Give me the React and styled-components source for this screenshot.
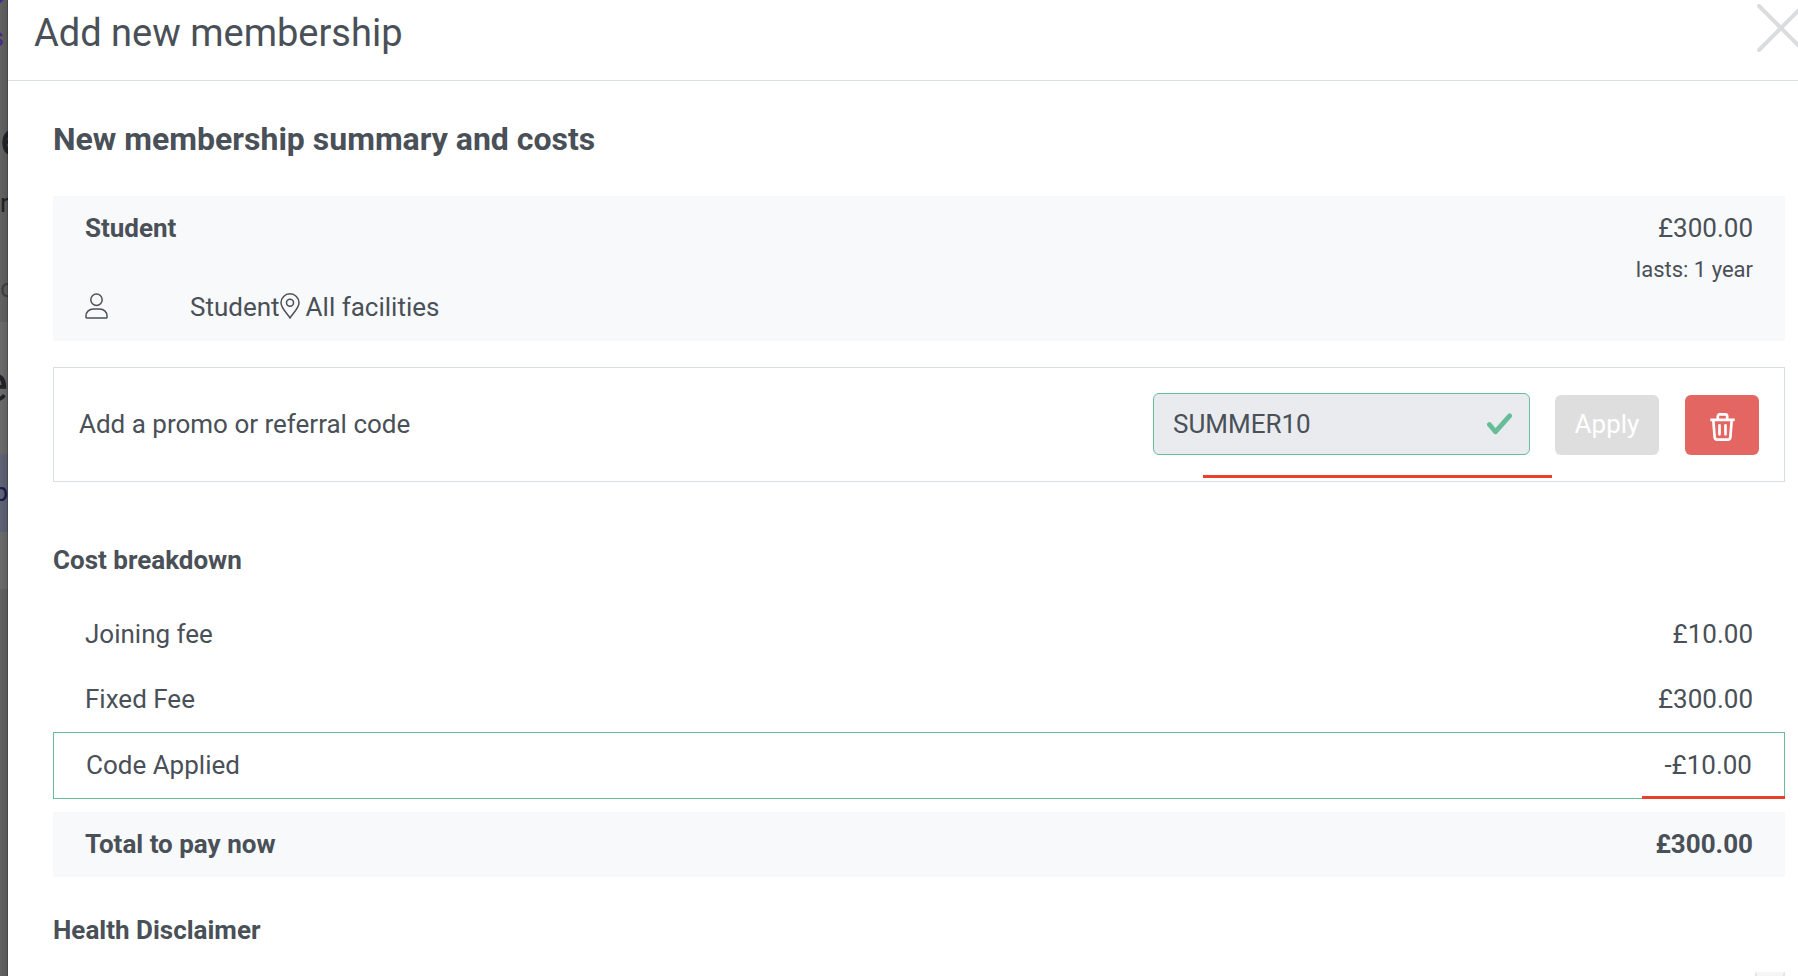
import React from 'react'
import styled, { createGlobalStyle } from 'styled-components'

const GlobalStyle = createGlobalStyle`
  * {
    box-sizing: border-box;
  }

  body {
    margin: 0;
    background: #fff;
    color: #495057;
    font-family: Roboto, sans-serif;
    font-size: 26px;
    line-height: 39px;
  }
`

const Page = styled.div`
  display: flex;
  height: 100vh;
  overflow: hidden;
`

const Backdrop = styled.div`
  flex: 0 0 8px;
  position: relative;
  overflow: hidden;
  background: #626262;

  &::after {
    content: '';
    position: absolute;
    inset: 0;
    background: linear-gradient(to right, transparent, rgba(0, 0, 0, 0.1) 85%, rgba(0, 0, 0, 0.4));
  }
`

const Strip = styled.div`
  display: flex;
  flex-direction: column;
  align-items: flex-start;
  padding: ${props => props.$pad || 0};
  background: ${props => props.$color};
`

const Peek = styled.span`
  align-self: ${props => (props.$end ? 'flex-end' : 'flex-start')};
  margin-top: ${props => props.$gap || 0}px;
  padding-right: ${props => props.$inset || 0}px;
  color: ${props => props.$color || '#212529'};
  font-size: ${props => (props.$large ? 52 : 26)}px;
  line-height: 40px;
`

const Dot = styled.span`
  align-self: flex-end;
  width: 22px;
  height: 22px;
  margin-top: -17px;
  margin-right: 3px;
  border-radius: 50%;
  background: #46298f;
`

const Modal = styled.section`
  flex: 1;
  min-width: 0;
  overflow-x: hidden;
  overflow-y: auto;
  scrollbar-width: none;
  background: #fff;
`

const Header = styled.header`
  display: flex;
  align-items: flex-start;
  justify-content: space-between;
  padding: 4px 0 18px 26px;
  border-bottom: 1px solid #d5dde5;
`

const Title = styled.h1`
  margin: 0;
  font-size: 38px;
  font-weight: 400;
  line-height: 58px;
`

const CloseButton = styled.button`
  flex: none;
  width: 48px;
  height: 48px;
  margin-right: -7px;
  padding: 0;
  border: 0;
  background: none;
  color: #dbdcdd;

  svg {
    display: block;
  }
`

const Body = styled.div`
  padding: 34px 13px 0 45px;
`

const Heading = styled.h2`
  margin: 0 0 33px;
  font-size: 32px;
  font-weight: 700;
  line-height: 48px;
`

const SubHeading = styled.h3`
  margin: ${props => props.$top}px 0 22px;
  font-size: 26px;
  font-weight: 700;
  line-height: 39px;
`

const Summary = styled.div`
  display: flex;
  justify-content: space-between;
  padding: 13px 32px 14px;
  background: #f8f9fb;
`

const Plan = styled.div`
  display: flex;
  flex-direction: column;
  justify-content: space-between;
`

const Price = styled.div`
  text-align: right;
`

const Duration = styled.div`
  margin: 2px 0 37px;
  font-size: 22px;
  line-height: 40px;
`

const Details = styled.div`
  display: flex;
  align-items: center;

  svg {
    flex: none;
    margin-bottom: 4px;
  }
`

const Member = styled.span`
  margin-left: 82px;
`

const Place = styled.span`
  margin-left: 6px;
`

const Promo = styled.form`
  display: flex;
  align-items: center;
  position: relative;
  margin-top: 26px;
  padding: 25px 25px 26px;
  border: 1px solid #d8dee4;
`

const PromoLabel = styled.label`
  flex: 1;
`

const CodeField = styled.div`
  display: flex;
  align-items: center;
  flex: none;
  width: 377px;
  height: 62px;
  padding: 0 17px 0 19px;
  border: 1px solid #66bd98;
  border-radius: 6px;
  background: #e9ebef;

  input {
    flex: 1;
    min-width: 0;
    padding: 0;
    border: 0;
    outline: 0;
    background: none;
    color: inherit;
    font: inherit;
  }
`

const Button = styled.button`
  display: flex;
  align-items: center;
  justify-content: center;
  align-self: flex-end;
  width: ${props => props.$width}px;
  height: 60px;
  margin-left: ${props => (props.$icon ? 26 : 25)}px;
  padding: ${props => (props.$icon ? '3px 0 0' : '0 0 2px')};
  border: 0;
  border-radius: 6px;
  background: ${props => props.$color};
  color: #fff;
  font: inherit;
`

// red underline drawn over the box it highlights
const Marker = styled.span`
  position: absolute;
  right: ${props => props.$right}px;
  bottom: ${props => props.$bottom}px;
  width: ${props => props.$width}px;
  height: 3px;
  background: #e8402a;
`

const Costs = styled.table`
  display: block;

  tbody,
  tfoot {
    display: block;
  }
`

const CostRow = styled.tr`
  display: flex;
  justify-content: space-between;
  position: relative;
  padding: 13px 32px;
  border: ${props => (props.$applied ? '1px solid #66bd98' : '0')};
`

const TotalRow = styled(CostRow)`
  margin-top: 13px;
  background: #f8f9fb;
`

const Cell = styled.td`
  padding: 0;
`

const RowHead = styled.th`
  padding: 0;
  font-weight: ${props => (props.$bold ? 700 : 400)};
  text-align: left;
`

const Consent = styled.input`
  display: block;
  appearance: none;
  width: 30px;
  height: 30px;
  margin: 0 0 0 auto;
  border: 2px solid #e2e3e4;
  border-top-color: #f6f6f6;
  background: #f6f6f6;
`

const CloseIcon = () => (
  <svg width="48" height="48" viewBox="0 0 48 48" fill="none" stroke="currentColor" strokeWidth="4" strokeLinecap="round">
    <path d="M2 2 46 46M46 2 2 46" />
  </svg>
)

const UserIcon = () => (
  <svg width="23" height="26" viewBox="0 0 23 26" fill="none" stroke="currentColor" strokeWidth="1.5">
    <circle cx="11.5" cy="6.7" r="5.7" />
    <path d="M1 24.2V23c0-4.4 3.4-7 7.4-7h6.2C18.6 16 22 18.6 22 23v1.2c0 .5-.3.8-.8.8H1.8c-.5 0-.8-.3-.8-.8z" />
  </svg>
)

const PinIcon = () => (
  <svg width="20" height="26" viewBox="0 0 20 26" fill="none" stroke="currentColor" strokeWidth="1.5">
    <path d="M10 25C8.5 22 1 15.5 1 9.8a9 9 0 0 1 18 0C19 15.5 11.5 22 10 25z" />
    <circle cx="10" cy="9.8" r="3.5" />
  </svg>
)

const CheckIcon = () => (
  <svg width="25" height="22" viewBox="0 0 25 22" fill="none" stroke="#66bd98" strokeWidth="4.8" strokeLinecap="round" strokeLinejoin="round">
    <path d="M2.4 11.5 8.4 18.8 22.6 2.8" />
  </svg>
)

const TrashIcon = () => (
  <svg width="25" height="28" viewBox="0 0 25 28" fill="none" stroke="currentColor" strokeWidth="2.7">
    <path d="M.3 6.8h24.4M7.8 6.5V3.5c0-1.4.8-2.2 2.2-2.2h5c1.4 0 2.2.8 2.2 2.2v3" />
    <path d="M3.3 7l1.3 16.9c.1 1.8 1 2.8 2.8 2.8h10.2c1.800 0 2.700-1 2.800-2.800L21.700 7" />
    <path d="M9.5 12.3v9M15.5 12.3v9" strokeLinecap="round" />
  </svg>
)

const fees = [
  { id: 1, name: 'Joining fee', amount: '£10.00' },
  { id: 2, name: 'Fixed Fee', amount: '£300.00' },
  { id: 3, name: 'Code Applied', amount: '-£10.00', applied: true },
]

const feeRows = fees.map((fee) => (
  <CostRow key={fee.id} $applied={fee.applied}>
    <RowHead scope="row">{fee.name}</RowHead>
    <Cell>
      {fee.amount}
      {fee.applied && <Marker $right={-1} $bottom={-1} $width={143} />}
    </Cell>
  </CostRow>
))

const App = () => {
  return (
    <>
      <GlobalStyle />
      <Page>
        <Backdrop aria-hidden="true">
          <Strip $pad="0 0 14px" $color="#626262">
            <Dot />
            <Peek $end $inset={4} $gap={12} $color="#46298f">s</Peek>
            <Peek $gap={62} $large>e</Peek>
            <Peek $gap={24}>re</Peek>
            <Peek $gap={45} $color="#3c4247">c</Peek>
          </Strip>
          <Strip $pad="42px 0 50px" $color="#6b6b6b">
            <Peek $end $large>e</Peek>
          </Strip>
          <Strip $pad="18px 0 20px" $color="#5f6375">
            <Peek $end $color="#191a4a">p</Peek>
          </Strip>
          <Strip $pad="0 0 57px" $color="#6b6b6b" />
        </Backdrop>
        <Modal role="dialog" aria-labelledby="title">
          <Header>
            <Title id="title">Add new membership</Title>
            <CloseButton type="button" aria-label="Close"><CloseIcon /></CloseButton>
          </Header>
          <Body>
            <Heading>New membership summary and costs</Heading>
            <Summary>
              <Plan>
                <strong>Student</strong>
                <Details>
                  <UserIcon />
                  <Member>Student</Member>
                  <PinIcon />
                  <Place>All facilities</Place>
                </Details>
              </Plan>
              <Price>
                £300.00
                <Duration>lasts: 1 year</Duration>
              </Price>
            </Summary>
            <Promo onSubmit={e => e.preventDefault()}>
              <PromoLabel htmlFor="code">Add a promo or referral code</PromoLabel>
              <CodeField>
                <input id="code" type="text" defaultValue="SUMMER10" />
                <CheckIcon />
              </CodeField>
              <Button type="submit" $width={104} $color="#dedede">Apply</Button>
              <Button type="button" $width={74} $color="#e46663" $icon aria-label="Remove code"><TrashIcon /></Button>
              <Marker $right={232} $bottom={3} $width={349} />
            </Promo>
            <SubHeading $top={59}>Cost breakdown</SubHeading>
            <Costs>
              <tbody>{feeRows}</tbody>
              <tfoot>
                <TotalRow>
                  <RowHead scope="row" $bold>Total to pay now</RowHead>
                  <Cell><strong>£300.00</strong></Cell>
                </TotalRow>
              </tfoot>
            </Costs>
            <SubHeading $top={34} id="health">Health Disclaimer</SubHeading>
            <Consent type="checkbox" aria-labelledby="health" />
          </Body>
        </Modal>
      </Page>
    </>
  )
}

export default App
